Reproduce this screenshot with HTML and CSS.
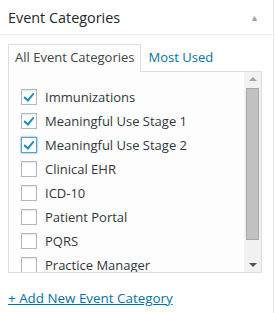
FILE: index.html
```html
<!DOCTYPE html>
<html lang="en">
<head>
    <meta charset="UTF-8">
    <title>Event Categories</title>
    <link rel="stylesheet" href="styles.css">
</head>
<body>

    <div class="postbox">
        <div class="box-header">
            <h2>Event Categories</h2>
            <span class="toggle">▲</span>
        </div>

        <div class="inside">
            <ul class="tabs">
                <li class="tab active">All Event Categories</li>
                <li class="tab"><a href="#">Most Used</a></li>
            </ul>

            <div class="panel">
                <ul class="checklist">
                    <li><span class="cb checked"></span>Immunizations</li>
                    <li><span class="cb checked"></span>Meaningful Use Stage 1</li>
                    <li><span class="cb checked focus"></span>Meaningful Use Stage 2</li>
                    <li><span class="cb"></span>Clinical EHR</li>
                    <li><span class="cb"></span>ICD-10</li>
                    <li><span class="cb"></span>Patient Portal</li>
                    <li><span class="cb"></span>PQRS</li>
                    <li><span class="cb"></span>Practice Manager</li>
                </ul>
                <div class="scrollbar">
                    <span class="arrow up"></span>
                    <div class="track"><div class="thumb"></div></div>
                    <span class="arrow down"></span>
                </div>
            </div>

            <a class="add-new" href="#">+ Add New Event Category</a>
        </div>
    </div>

</body>
</html>
```

FILE: styles.css
```css
* {
    margin: 0;
    padding: 0;
    box-sizing: border-box;
    font-family: "Open Sans", sans-serif;
}

body {
    background: #fff;
    color: #444;
    font-size: 13px;
}

.postbox {
    width: 274px;
    height: 313px;
    border-right: 1px solid #e5e5e5;
}

.box-header {
    height: 35px;
    display: flex;
    align-items: center;
    justify-content: space-between;
    padding: 0 14px 0 8px;
    border-bottom: 1px solid #eee;
}

.box-header h2 {
    font-size: 14.4px;
    font-weight: 400;
    color: #23282d;
}

.toggle {
    font-size: 9px;
    color: #a0a5aa;
}

.inside {
    padding: 9px 11px 0 8px;
}

.tabs {
    list-style: none;
    display: flex;
    height: 27px;
}

.tab {
    padding: 3px 6px 5px;
    line-height: 18px;
    border: 1px solid transparent;
    border-bottom: none;
}

.tab.active {
    border-color: #ddd;
    background: #fdfdfd;
    position: relative;
    z-index: 1;
    height: 28px;
}

.tab a {
    color: #0073aa;
    text-decoration: none;
}

.panel {
    height: 202px;
    border: 1px solid #ddd;
    background: #fdfdfd;
    display: flex;
}

.checklist {
    list-style: none;
    flex-grow: 1;
    padding: 13px 0 0 12px;
    overflow: hidden;
}

.checklist li {
    display: flex;
    align-items: center;
    height: 24px;
    color: #32373c;
    white-space: nowrap;
}

.cb {
    width: 16px;
    height: 16px;
    border: 1px solid #b4b9be;
    background: #fff;
    margin-right: 8px;
    flex-shrink: 0;
    box-shadow: inset 0 1px 2px rgba(0, 0, 0, 0.1);
    position: relative;
}

.cb.checked::after {
    content: "";
    position: absolute;
    left: 4px;
    top: 1px;
    width: 4px;
    height: 8px;
    border: solid #1e8cbe;
    border-width: 0 2.5px 2.5px 0;
    transform: rotate(40deg);
}

.cb.focus {
    border-color: #5b9dd9;
    box-shadow: 0 0 2px rgba(30, 140, 190, 0.8);
}

.scrollbar {
    width: 17px;
    background: #f1f1f1;
    display: flex;
    flex-direction: column;
}

.arrow {
    height: 14px;
    display: flex;
    justify-content: center;
    align-items: center;
}

.arrow::before {
    content: "";
    border-left: 4px solid transparent;
    border-right: 4px solid transparent;
}

.arrow.up::before {
    border-bottom: 4px solid #a3a3a3;
}

.arrow.down::before {
    border-top: 4px solid #505050;
}

.track {
    flex-grow: 1;
    padding: 2px 2px;
}

.thumb {
    height: 152px;
    background: #c1c1c1;
    border: 1px solid #a8a8a8;
}

.add-new {
    display: inline-block;
    margin-top: 16px;
    font-size: 13.4px;
    color: #0073aa;
    text-decoration: underline;
}
```
